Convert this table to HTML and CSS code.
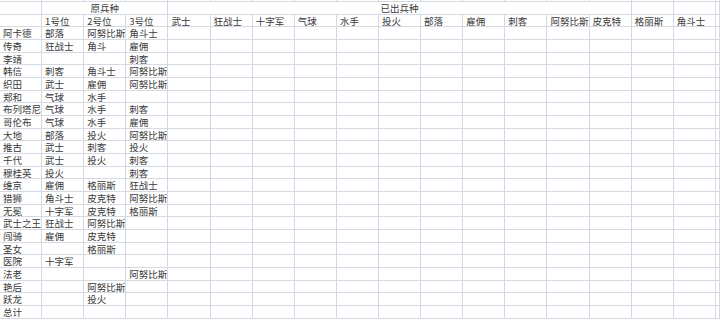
FILE: index.html
```html
<!DOCTYPE html>
<html lang="zh-CN">
<head>
<meta charset="utf-8">
<title>兵种表</title>
<link rel="stylesheet" href="styles.css">
</head>
<body>
<div class="sheet">
<span class="top"></span><span class="top"></span><span class="top"></span><span class="top"></span><span class="top"></span><span class="top"></span><span class="top"></span><span class="top"></span><span class="top"></span><span class="top"></span><span class="top"></span><span class="top"></span><span class="top"></span><span class="top"></span><span class="top"></span><span class="top"></span><span class="top"></span><span class="top"></span>

<span></span><span class="m3">原兵种</span><span class="m11">已出兵种</span><span></span><span></span><span></span>

<span></span><span>1号位</span><span>2号位</span><span>3号位</span><span>武士</span><span>狂战士</span><span>十字军</span><span>气球</span><span>水手</span><span>投火</span><span>部落</span><span>雇佣</span><span>刺客</span><span>阿努比斯</span><span>皮克特</span><span>格丽斯</span><span>角斗士</span><span></span>

<span>阿卡德</span><span>部落</span><span>阿努比斯</span><span>角斗士</span><span></span><span></span><span></span><span></span><span></span><span></span><span></span><span></span><span></span><span></span><span></span><span></span><span></span><span></span>
<span>传奇</span><span>狂战士</span><span>角斗</span><span>雇佣</span><span></span><span></span><span></span><span></span><span></span><span></span><span></span><span></span><span></span><span></span><span></span><span></span><span></span><span></span>
<span>李靖</span><span></span><span></span><span>刺客</span><span></span><span></span><span></span><span></span><span></span><span></span><span></span><span></span><span></span><span></span><span></span><span></span><span></span><span></span>
<span>韩信</span><span>刺客</span><span>角斗士</span><span>阿努比斯</span><span></span><span></span><span></span><span></span><span></span><span></span><span></span><span></span><span></span><span></span><span></span><span></span><span></span><span></span>
<span>织田</span><span>武士</span><span>雇佣</span><span>阿努比斯</span><span></span><span></span><span></span><span></span><span></span><span></span><span></span><span></span><span></span><span></span><span></span><span></span><span></span><span></span>
<span>郑和</span><span>气球</span><span>水手</span><span></span><span></span><span></span><span></span><span></span><span></span><span></span><span></span><span></span><span></span><span></span><span></span><span></span><span></span><span></span>
<span>布列塔尼</span><span>气球</span><span>水手</span><span>刺客</span><span></span><span></span><span></span><span></span><span></span><span></span><span></span><span></span><span></span><span></span><span></span><span></span><span></span><span></span>
<span>哥伦布</span><span>气球</span><span>水手</span><span>雇佣</span><span></span><span></span><span></span><span></span><span></span><span></span><span></span><span></span><span></span><span></span><span></span><span></span><span></span><span></span>
<span>大地</span><span>部落</span><span>投火</span><span>阿努比斯</span><span></span><span></span><span></span><span></span><span></span><span></span><span></span><span></span><span></span><span></span><span></span><span></span><span></span><span></span>
<span>推古</span><span>武士</span><span>刺客</span><span>投火</span><span></span><span></span><span></span><span></span><span></span><span></span><span></span><span></span><span></span><span></span><span></span><span></span><span></span><span></span>
<span>千代</span><span>武士</span><span>投火</span><span>刺客</span><span></span><span></span><span></span><span></span><span></span><span></span><span></span><span></span><span></span><span></span><span></span><span></span><span></span><span></span>
<span>穆桂英</span><span>投火</span><span></span><span>刺客</span><span></span><span></span><span></span><span></span><span></span><span></span><span></span><span></span><span></span><span></span><span></span><span></span><span></span><span></span>
<span>维京</span><span>雇佣</span><span>格丽斯</span><span>狂战士</span><span></span><span></span><span></span><span></span><span></span><span></span><span></span><span></span><span></span><span></span><span></span><span></span><span></span><span></span>
<span>猎狮</span><span>角斗士</span><span>皮克特</span><span>阿努比斯</span><span></span><span></span><span></span><span></span><span></span><span></span><span></span><span></span><span></span><span></span><span></span><span></span><span></span><span></span>
<span>无冕</span><span>十字军</span><span>皮克特</span><span>格丽斯</span><span></span><span></span><span></span><span></span><span></span><span></span><span></span><span></span><span></span><span></span><span></span><span></span><span></span><span></span>
<span>武士之王</span><span>狂战士</span><span>阿努比斯</span><span></span><span></span><span></span><span></span><span></span><span></span><span></span><span></span><span></span><span></span><span></span><span></span><span></span><span></span><span></span>
<span>闯骑</span><span>雇佣</span><span>皮克特</span><span></span><span></span><span></span><span></span><span></span><span></span><span></span><span></span><span></span><span></span><span></span><span></span><span></span><span></span><span></span>
<span>圣女</span><span></span><span>格丽斯</span><span></span><span></span><span></span><span></span><span></span><span></span><span></span><span></span><span></span><span></span><span></span><span></span><span></span><span></span><span></span>
<span>医院</span><span>十字军</span><span></span><span></span><span></span><span></span><span></span><span></span><span></span><span></span><span></span><span></span><span></span><span></span><span></span><span></span><span></span><span></span>
<span>法老</span><span></span><span></span><span>阿努比斯</span><span></span><span></span><span></span><span></span><span></span><span></span><span></span><span></span><span></span><span></span><span></span><span></span><span></span><span></span>
<span>艳后</span><span></span><span>阿努比斯</span><span></span><span></span><span></span><span></span><span></span><span></span><span></span><span></span><span></span><span></span><span></span><span></span><span></span><span></span><span></span>
<span>跃龙</span><span></span><span>投火</span><span></span><span></span><span></span><span></span><span></span><span></span><span></span><span></span><span></span><span></span><span></span><span></span><span></span><span></span><span></span>
<span>总计</span><span></span><span></span><span></span><span></span><span></span><span></span><span></span><span></span><span></span><span></span><span></span><span></span><span></span><span></span><span></span><span></span><span></span>
</div>
</body>
</html>
```
FILE: styles.css
```css
html, body {
  margin: 0;
  padding: 0;
  background: #ffffff;
}
body {
  width: 720px;
  height: 320px;
  overflow: hidden;
}
.sheet {
  display: grid;
  grid-template-columns: repeat(17, 42.12px) 1fr;
  grid-template-rows: 2px repeat(25, 12.68px);
  width: 720px;
  overflow: hidden;
  font-family: "Noto Sans CJK SC", "Noto Sans", sans-serif;
  font-size: 9.5px;
  color: #3a3a3a;
}
.sheet > span {
  box-sizing: border-box;
  border-right: 1px solid #d5d9e3;
  border-bottom: 1px solid #d5d9e3;
  padding-left: 3px;
  line-height: 12px;
  white-space: nowrap;
  overflow: hidden;
}
.sheet > span.top {
  padding: 0;
}
.sheet > span.m3 {
  grid-column: span 3;
  text-align: center;
  padding-left: 0;
}
.sheet > span.m11 {
  grid-column: span 11;
  text-align: center;
  padding-left: 0;
}
```
